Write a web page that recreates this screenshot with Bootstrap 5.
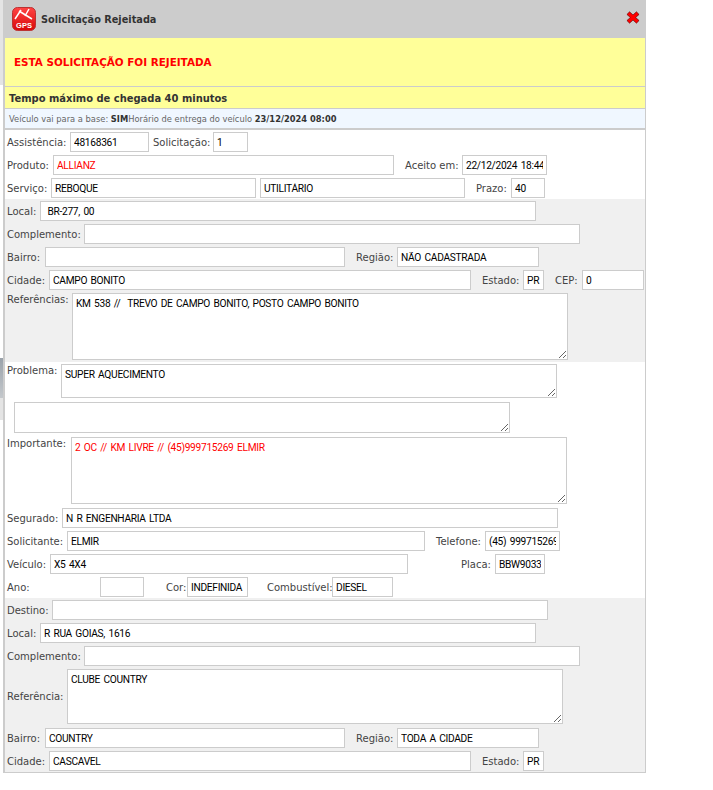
<!DOCTYPE html>
<html lang="pt-BR"><head><meta charset="utf-8"><title>Solicitação Rejeitada</title>
<link href="https://cdn.jsdelivr.net/npm/bootstrap@5.3.0/dist/css/bootstrap.min.css" rel="stylesheet">
<style>
html,body{background:#fff;margin:0;padding:0}
body{font-family:"DejaVu Sans",Verdana,sans-serif;font-size:10px;color:#444;overflow:hidden;height:790px}
.shell{height:790px;align-items:flex-start}
.rail{width:3px;height:790px;flex:none;background:linear-gradient(#e4e4e4 0,#e4e4e4 85px,#fff 85px,#fff 358px,#9aa2aa 358px,#c4c8cc 398px,#e4e4e4 398px,#e4e4e4 420px,#fff 420px)}
.panel{width:643px;flex:none;border-left:2px solid #ccc;border-right:1px solid #ccc;border-bottom:1px solid #ccc;height:773px}
.head{height:38px;background:#ccc;padding-left:7px;padding-right:5px}
.head-title{font-weight:700;font-size:9.75px;margin-left:5px;color:#333;padding-top:2px}
.banner{height:49px;background:#ff9;padding-left:9px;padding-top:2px;color:#f00;font-weight:700;font-size:10.4px;border-bottom:1px solid #ccc}
.time{height:22px;background:#ff9;padding-left:4px;padding-top:4px;font-weight:700;font-size:9.95px;color:#333;border-bottom:1px solid #ccc}
.base{height:21px;background:#f0f7ff;padding-left:4px;padding-top:1px;font-size:8.32px;color:#666;border-bottom:2px solid #ccc}
.base b{color:#333}
.zone{padding:2px 0 1px 2px}
.zone-b{padding-bottom:2px}
.shade{background:#f0f0f0}
.line{margin-bottom:3px;align-items:flex-start}
.line:last-child{margin-bottom:0}
.tall{margin-bottom:4px}
.mid{align-items:center}
.lab{flex:none;height:20px;line-height:22px;white-space:nowrap;color:#444}
.tall .lab{height:auto;line-height:14px}
.mid .lab{line-height:22px}
.form-control.fld{flex:none;height:20px;min-height:0;border:1px solid #ccc;border-radius:0;padding:0 3px;font-family:Roboto,"Liberation Sans",Arial,sans-serif;font-size:10.2px;letter-spacing:-.3px;word-spacing:1.2px;line-height:18px;color:#000;background:#fff;box-shadow:none}
.red.form-control.fld{color:#f00}
textarea.form-control.fld{line-height:14px;padding:3px;resize:both}
.form-control.h67{height:67px}.form-control.h34{height:34px}.form-control.h31{height:31px}.form-control.h55{height:55px}
.w21{width:21px}.w27{width:27px}.w33{width:33px}.w34{width:34px}.w35{width:35px}.w38{width:38px}.w41{width:41px}.w42{width:42px}.w43{width:43px}.w44{width:44px}.w45{width:45px}.w46{width:46px}.w49{width:49px}.w54{width:54px}.w55{width:55px}.w57{width:57px}.w60{width:60px}.w63{width:63px}.w64{width:64px}.w65{width:65px}.w77{width:77px}.w93{width:93px}
.form-control.f21{width:21px}.form-control.f34{width:34px}.form-control.f35{width:35px}.form-control.f44{width:44px}.form-control.f50{width:50px}.form-control.f61{width:61px}.form-control.f62{width:62px}.form-control.f75{width:75px}.form-control.f79{width:79px}.form-control.f85{width:85px}.form-control.f142{width:142px}.form-control.f205{width:205px}.form-control.f300{width:300px}.form-control.f341{width:341px}.form-control.f358{width:358px}.form-control.f422{width:422px}.form-control.f496{width:496px}
.ml4{margin-left:4px}.ml7{margin-left:7px}.ml11{margin-left:11px}.ml19{margin-left:19px}.ml22{margin-left:22px}.ml53{margin-left:53px}
</style></head><body>
<div class="shell d-flex">
<div class="rail"></div>
<div class="panel">
 <div class="head d-flex align-items-center">
  <svg width="24" height="24" viewBox="0 0 24 24" aria-hidden="true"><defs><linearGradient id="gr" x1="0" y1="0" x2="0" y2="1"><stop offset="0" stop-color="#f44"/><stop offset="1" stop-color="#d8080a"/></linearGradient></defs><rect x=".5" y=".5" width="23" height="23" rx="5" fill="url(#gr)" stroke="#b33"/><path d="M3 12 9 3M7 4l13 8M17 2l-4 7" fill="none" stroke="#fff" stroke-width="1.5"/><text x="12" y="21" text-anchor="middle" font-family="Liberation Sans,sans-serif" font-size="7.5" font-weight="700" fill="#fff">GPS</text></svg>
  <span class="head-title">Solicitação Rejeitada</span>
  <svg class="ms-auto mb-1" width="14" height="13" viewBox="0 0 16 15" aria-hidden="true"><path d="M1 4 4 1l4 3.500L12 1l3 3-4 3.500 4 3.500-3 3-4-3.500L4 14l-3-3 4-3.500z" fill="#f00" stroke="#500" stroke-width=".7"/></svg>
 </div>
 <div class="banner d-flex align-items-center">ESTA SOLICITAÇÃO FOI REJEITADA</div>
 <div class="time d-flex align-items-center">Tempo máximo de chegada 40 minutos</div>
 <div class="base d-flex align-items-center"><span>Veículo vai para a base: <b>SIM</b>Horário de entrega do veículo <b>23/12/2024 08:00</b></span></div>

 <div class="zone">
  <div class="line d-flex"><span class="lab w63">Assistência:</span><input class="form-control fld f79" value="48168361"><span class="lab ml4 w60">Solicitação:</span><input class="form-control fld f35" value="1"></div>
  <div class="line d-flex"><span class="lab w46">Produto:</span><input class="form-control fld red f341" value="ALLIANZ"><span class="lab ml11 w57">Aceito em:</span><input class="form-control fld f85" value="22/12/2024 18:44"></div>
  <div class="line d-flex"><span class="lab w44">Serviço:</span><input class="form-control fld f205" value="REBOQUE"><input class="form-control fld ml4 f205" value="UTILITÁRIO"><span class="lab ml11 w35">Prazo:</span><input class="form-control fld f34" value="40"></div>
 </div>

 <div class="zone zone-b shade">
  <div class="line d-flex"><span class="lab w33">Local:</span><input class="form-control fld f496" value=" BR-277, 00"></div>
  <div class="line d-flex"><span class="lab w77">Complemento:</span><input class="form-control fld f496" value=""></div>
  <div class="line d-flex"><span class="lab w38">Bairro:</span><input class="form-control fld f300" value=""><span class="lab ml11 w41">Região:</span><input class="form-control fld f142" value="NÃO CADASTRADA"></div>
  <div class="line d-flex"><span class="lab w42">Cidade:</span><input class="form-control fld f422" value="CAMPO BONITO"><span class="lab ml11 w41">Estado:</span><input class="form-control fld f21" value="PR"><span class="lab ml11 w27">CEP:</span><input class="form-control fld f62" value="0"></div>
  <div class="line tall d-flex"><span class="lab w65">Referências:</span><textarea class="form-control fld f496 h67">KM 538 //  TREVO DE CAMPO BONITO, POSTO CAMPO BONITO</textarea></div>
 </div>

 <div class="zone">
  <div class="line tall d-flex"><span class="lab w54">Problema:</span><textarea class="form-control fld f496 h34">SUPER AQUECIMENTO</textarea></div>
  <div class="line tall d-flex"><textarea class="form-control fld ml7 f496 h31"></textarea></div>
  <div class="line tall d-flex"><span class="lab w64">Importante:</span><textarea class="form-control fld red f496 h67">2 OC // KM LIVRE // (45)999715269 ELMIR</textarea></div>
  <div class="line d-flex"><span class="lab w55">Segurado:</span><input class="form-control fld f496" value="N R ENGENHARIA LTDA"></div>
  <div class="line d-flex"><span class="lab w60">Solicitante:</span><input class="form-control fld f358" value="ELMIR"><span class="lab ml11 w49">Telefone:</span><input class="form-control fld f75" value="(45) 999715269"></div>
  <div class="line d-flex"><span class="lab w43">Veículo:</span><input class="form-control fld f358" value="X5 4X4"><span class="lab ml53 w34">Placa:</span><input class="form-control fld f50" value="BBW9033"></div>
  <div class="line d-flex"><span class="lab w93">Ano:</span><input class="form-control fld f44" value=""><span class="lab ml22 w21">Cor:</span><input class="form-control fld f61" value="INDEFINIDA"><span class="lab ml19 w65">Combustível:</span><input class="form-control fld f61" value="DIESEL"></div>
 </div>

 <div class="zone shade">
  <div class="line d-flex"><span class="lab w45">Destino:</span><input class="form-control fld f496" value=""></div>
  <div class="line d-flex"><span class="lab w33">Local:</span><input class="form-control fld f496" value="R RUA GOIAS, 1616"></div>
  <div class="line d-flex"><span class="lab w77">Complemento:</span><input class="form-control fld f496" value=""></div>
  <div class="line tall mid d-flex"><span class="lab w60">Referência:</span><textarea class="form-control fld f496 h55">CLUBE COUNTRY</textarea></div>
  <div class="line d-flex"><span class="lab w38">Bairro:</span><input class="form-control fld f300" value="COUNTRY"><span class="lab ml11 w41">Região:</span><input class="form-control fld f142" value="TODA A CIDADE"></div>
  <div class="line d-flex"><span class="lab w42">Cidade:</span><input class="form-control fld f422" value="CASCAVEL"><span class="lab ml11 w41">Estado:</span><input class="form-control fld f21" value="PR"></div>
 </div>
</div>
</div>
<script src="https://cdn.jsdelivr.net/npm/bootstrap@5.3.0/dist/js/bootstrap.bundle.min.js"></script>
</body></html>
